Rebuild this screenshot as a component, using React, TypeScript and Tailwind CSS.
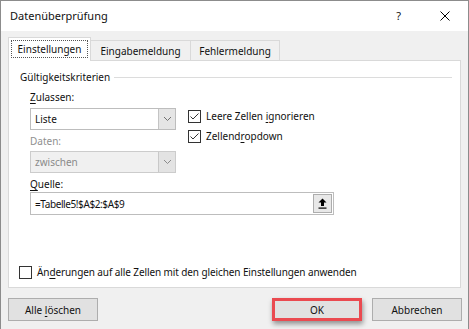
import React from "react";

function Check({ checked }: { checked: boolean }) {
  return (
    <span className="w-[13px] h-[13px] border border-[#333333] bg-white flex items-center justify-center shrink-0">
      {checked && (
        <svg width="11" height="11" viewBox="0 0 11 11">
          <path d="M1.5 5.5 L4 8 L9.5 2.5" fill="none" stroke="#333333" strokeWidth="1" />
        </svg>
      )}
    </span>
  );
}

function Chevron({ color }: { color: string }) {
  return (
    <svg width="9" height="6" viewBox="0 0 9 6">
      <path d="M1 1 L4.5 4.5 L8 1" fill="none" stroke={color} strokeWidth="1" />
    </svg>
  );
}

export default function App() {
  return (
    <div className="w-[469px] h-[329px] overflow-hidden bg-[#f0f0f0] border-l border-t border-r border-[#8c8c8c] flex flex-col text-[10px] leading-[16px] text-[#111] font-['Noto_Sans','Liberation_Sans',sans-serif]">
      {/* Title bar */}
      <div className="h-[30px] bg-white flex items-center pl-[9px] shrink-0">
        <span className="text-[11px] leading-[20px] mt-[-1px]">Datenüberprüfung</span>
        <div className="ml-auto flex items-center">
          <span className="text-[11px] leading-[20px] mr-[39px]">?</span>
          <svg width="10" height="10" viewBox="0 0 10 10" className="mr-[18px]">
            <path d="M0.5 0.5 L9.5 9.5 M9.5 0.5 L0.5 9.5" stroke="#000" strokeWidth="1" />
          </svg>
        </div>
      </div>

      {/* Body */}
      <div className="flex-1 px-[7px] pt-[6px] flex flex-col">
        {/* Tabs */}
        <div className="flex items-end h-[23px] relative z-10">
          <div className="w-[83px] h-[24px] mb-[-1px] bg-white border border-b-0 border-[#d9d9d9] flex pt-[2px] px-[2px] pb-[3px]">
            <span className="flex-1 border border-dotted border-[#555] flex items-center justify-center">Einstellungen</span>
          </div>
          <div className="w-[100px] h-[20px] border border-l-0 border-b-0 border-[#d9d9d9] bg-[#f0f0f0] flex items-center justify-center">
            Eingabemeldung
          </div>
          <div className="w-[89px] h-[20px] border border-l-0 border-b-0 border-[#d9d9d9] bg-[#f0f0f0] flex items-center justify-center">
            Fehlermeldung
          </div>
        </div>

        {/* Panel */}
        <div className="h-[228px] bg-white border border-[#d9d9d9] flex flex-col pl-[11px] pr-[8px] pt-[8px] pb-[7px]">
          <div className="flex items-center h-[16px]">
            <span>Gültigkeitskriterien</span>
            <div className="flex-1 h-px bg-[#dcdcdc] ml-[4px]" />
          </div>

          <div className="flex ml-[10px] mt-[4px]">
            {/* Left column */}
            <div className="w-[146px] flex flex-col">
              <span className="h-[16px]">
                <u className="underline-offset-2">Z</u>ulassen:
              </span>
              <div className="mt-[3px] h-[22px] border border-[#bdbdbd] bg-white flex">
                <span className="flex-1 pl-[4px] flex items-center">Liste</span>
                <span className="w-[17px] bg-[#e5e5e5] border-l border-[#c4c4c4] flex items-center justify-center">
                  <Chevron color="#707070" />
                </span>
              </div>
              <span className="h-[16px] mt-[3px] text-[#8f8f8f]">Daten:</span>
              <div className="mt-[2px] h-[22px] border border-[#cccccc] bg-[#f0f0f0] flex">
                <span className="flex-1 pl-[4px] flex items-center text-[#8a8a8a]">zwischen</span>
                <span className="w-[17px] bg-[#e3e3e3] border-l border-[#c8c8c8] flex items-center justify-center">
                  <Chevron color="#8a8a8a" />
                </span>
              </div>
              <span className="h-[16px] mt-[3px]">
                <u className="underline-offset-2">Q</u>uelle:
              </span>
            </div>

            {/* Right column */}
            <div className="flex flex-col gap-[4px] ml-[12px] mt-[19px]">
              <label className="flex items-center h-[16px] gap-[5px]">
                <Check checked />
                <span>
                  Leere Zellen <u className="underline-offset-2">i</u>gnorieren
                </span>
              </label>
              <label className="flex items-center h-[16px] gap-[5px]">
                <Check checked />
                <span>
                  Zellend<u className="underline-offset-2">r</u>opdown
                </span>
              </label>
            </div>
          </div>

          {/* Source input */}
          <div className="ml-[10px] w-[304px] h-[23px] border border-[#bdbdbd] bg-white flex items-center">
            <span className="flex-1 pl-[4px] tracking-[-0.4px]">=Tabelle5!$A$2:$A$9</span>
            <span className="w-[19px] h-[19px] mr-[1px] border border-[#adadad] bg-[#e8e8e8] flex items-center justify-center">
              <svg width="9" height="11" viewBox="0 0 9 11">
                <path d="M4.5 0.5 L8.5 4.5 L6 4.5 L6 8 L3 8 L3 4.5 L0.5 4.5 Z" fill="#000" />
                <rect x="0.5" y="9.5" width="8" height="1.2" fill="#000" />
              </svg>
            </span>
          </div>

          {/* Bottom checkbox */}
          <label className="mt-auto flex items-center h-[16px] gap-[5px] ml-[-1px]">
            <Check checked={false} />
            <span className="tracking-[-0.1px]">
              Än<u className="underline-offset-2">d</u>erungen auf alle Zellen mit den gleichen Einstellungen anwenden
            </span>
          </label>
        </div>

        {/* Buttons */}
        <div className="flex mt-[10px] items-center">
          <button className="w-[90px] h-[23px] bg-[#e1e1e1] border border-[#adadad] flex items-center justify-center">
            <span>
              Alle <u className="underline-offset-2">l</u>öschen
            </span>
          </button>
          <div className="ml-auto relative">
            <button className="w-[88px] h-[21px] m-[1px] bg-[#e1e1e1] border border-[#adadad] flex items-center justify-center">
              OK
            </button>
            <div className="absolute inset-0 border-[3px] border-[#ea4a50] shadow-[1px_3px_5px_rgba(0,0,0,0.4)]" />
          </div>
          <button className="w-[90px] h-[23px] ml-[10px] mr-[-1px] bg-[#e1e1e1] border border-[#adadad] flex items-center justify-center">
            Abbrechen
          </button>
        </div>
      </div>
    </div>
  );
}
